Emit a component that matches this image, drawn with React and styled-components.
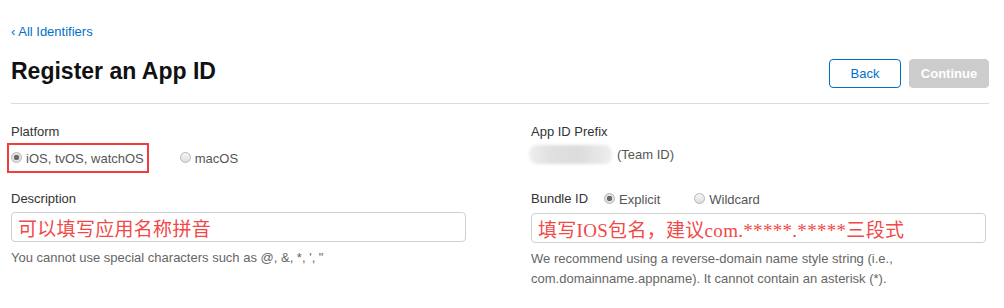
import React from 'react';
import styled, { createGlobalStyle } from 'styled-components';

const GlobalStyle = createGlobalStyle`
  body {
    margin: 0;
    background: #fff;
    font-family: "Liberation Sans", Arial, sans-serif;
    color: #333;
  }
`;

const Page = styled.div`
  width: 978px;
  padding: 24px 0 0 11px;
`;

const BackLink = styled.a`
  display: block;
  font-size: 13px;
  color: #0070c9;
  text-decoration: none;
  line-height: 16px;
`;

const HeaderRow = styled.div`
  display: flex;
  justify-content: space-between;
  align-items: flex-end;
  padding-bottom: 15px;
  border-bottom: 1px solid #dcdcdc;
  margin-top: 17px;
`;

const Title = styled.h1`
  margin: 0;
  font-size: 23px;
  font-weight: bold;
  color: #111;
  line-height: 28px;
  padding-bottom: 3px;
`;

const Buttons = styled.div`
  display: flex;
  gap: 8px;
`;

const Button = styled.button`
  height: 29px;
  width: ${p => p.width}px;
  border-radius: 4px;
  font-family: "Liberation Sans", Arial, sans-serif;
  font-size: 13px;
  border: 1px solid ${p => (p.disabled ? '#cccccc' : '#0070c9')};
  background: ${p => (p.disabled ? '#cccccc' : '#fff')};
  color: ${p => (p.disabled ? '#fff' : '#0070c9')};
  font-weight: ${p => (p.disabled ? 'bold' : 'normal')};
  padding: 0;
`;

const Grid = styled.div`
  display: grid;
  grid-template-columns: 455px 455px;
  column-gap: 65px;
  row-gap: 17px;
  padding-top: 19px;
`;

const Field = styled.div`
  display: flex;
  flex-direction: column;
`;

const Label = styled.div`
  font-size: 13px;
  color: #333;
  line-height: 18px;
`;

const LabelRow = styled.div`
  display: flex;
  align-items: center;
  height: 18px;
`;

const RadioRow = styled.div`
  display: flex;
  align-items: center;
  gap: ${p => p.gap}px;
  margin-top: ${p => p.top || 0}px;
  margin-left: ${p => p.left || 0}px;
`;

const Highlight = styled.div`
  display: flex;
  align-items: center;
  border: 2px solid #f03c3c;
  height: 26px;
  padding: 0 3px 0 2px;
  margin-left: -4px;
`;

const RadioItem = styled.label`
  display: flex;
  align-items: center;
  gap: 4px;
  font-size: 13px;
  color: #555;
`;

const RadioDot = styled.span`
  width: 11px;
  height: 11px;
  border-radius: 50%;
  box-sizing: border-box;
  border: 1px solid #b5b5b5;
  background: ${p =>
    p.checked
      ? 'radial-gradient(circle, #6a6a6a 0 2.5px, #e2e2e2 3px)'
      : 'linear-gradient(#f6f6f6, #dedede)'};
  margin-top: -2px;
`;

const Radio = ({ checked, children }) => (
  <RadioItem>
    <RadioDot checked={checked} />
    {children}
  </RadioItem>
);

const PrefixRow = styled.div`
  display: flex;
  align-items: center;
  margin-top: 4px;
  font-size: 13px;
  color: #555;
`;

const Blurred = styled.span`
  width: 83px;
  height: 19px;
  margin-left: -2px;
  margin-right: 5px;
  border-radius: 8px;
  background: linear-gradient(90deg, #efefef 0%, #e0e0e0 25%, #dcdcdc 60%, #eeeeee 100%);
  filter: blur(1.5px);
`;

const Input = styled.div`
  height: 30px;
  margin-top: ${p => p.top}px;
  border: 1px solid #cfcfcf;
  border-radius: 4px;
  box-sizing: border-box;
  display: flex;
  align-items: center;
  padding-left: 6px;
  font-family: "Liberation Serif", "Noto Sans CJK SC", serif;
  font-size: 19px;
  letter-spacing: 0.3px;
  color: #f24848;
  white-space: nowrap;
`;

const Help = styled.p`
  margin: 6px 0 0;
  font-size: 13px;
  color: #666;
  line-height: 20px;
`;

export default function App() {
  return (
    <Page>
      <GlobalStyle />
      <BackLink href="#">‹ All Identifiers</BackLink>
      <HeaderRow>
        <Title>Register an App ID</Title>
        <Buttons>
          <Button width={72}>Back</Button>
          <Button width={80} disabled>Continue</Button>
        </Buttons>
      </HeaderRow>
      <Grid>
        <Field>
          <Label>Platform</Label>
          <RadioRow gap={31} top={2}>
            <Highlight>
              <Radio checked>iOS, tvOS, watchOS</Radio>
            </Highlight>
            <Radio>macOS</Radio>
          </RadioRow>
        </Field>
        <Field>
          <Label>App ID Prefix</Label>
          <PrefixRow>
            <Blurred />
            (Team ID)
          </PrefixRow>
        </Field>
        <Field>
          <Label>Description</Label>
          <Input top={4}>可以填写应用名称拼音</Input>
          <Help>You cannot use special characters such as @, &amp;, *, ', "</Help>
        </Field>
        <Field>
          <LabelRow>
            <Label>Bundle ID</Label>
            <RadioRow gap={34} left={16}>
              <Radio checked>Explicit</Radio>
              <Radio>Wildcard</Radio>
            </RadioRow>
          </LabelRow>
          <Input top={5}>填写IOS包名，建议com.*****.*****三段式</Input>
          <Help>
            We recommend using a reverse-domain name style string (i.e.,
            <br />
            com.domainname.appname). It cannot contain an asterisk (*).
          </Help>
        </Field>
      </Grid>
    </Page>
  );
}
